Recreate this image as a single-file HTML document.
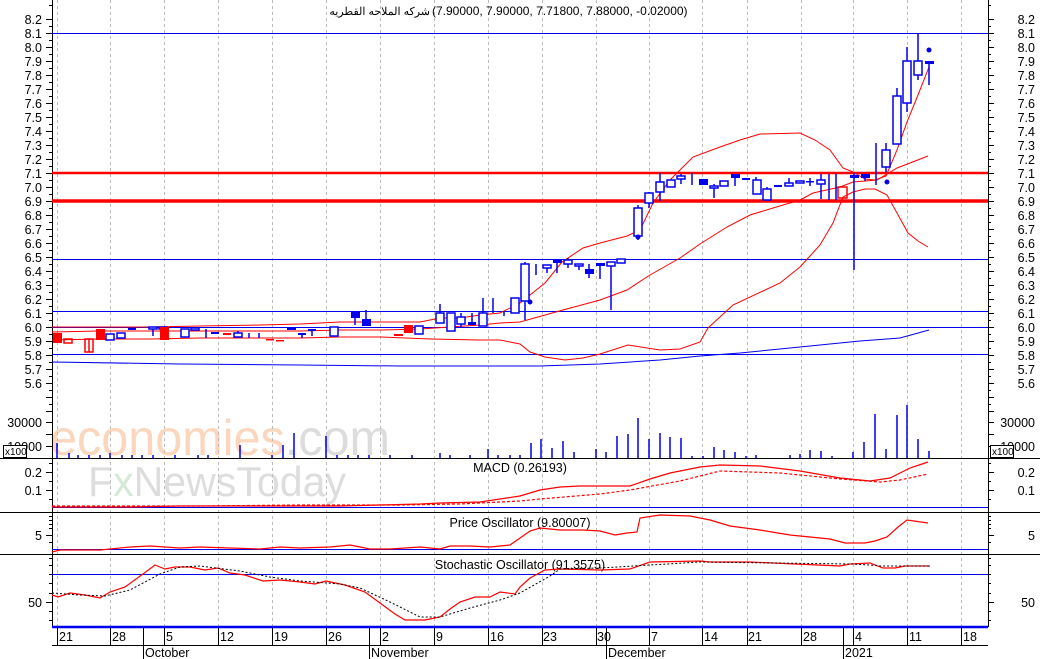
<!DOCTYPE html>
<html><head><meta charset="utf-8"><style>
html,body{margin:0;padding:0;background:#fff;}
body{width:1040px;height:659px;overflow:hidden;position:relative;font-family:"Liberation Sans","Noto Sans CJK SC",sans-serif;}
svg{position:absolute;left:0;top:0;}
text{font-family:"Liberation Sans","Noto Sans CJK SC",sans-serif;font-size:12.5px;fill:#000;}
</style></head><body>
<svg width="1040" height="659" viewBox="0 0 1040 659" xmlns="http://www.w3.org/2000/svg">
<!-- watermarks -->
<text x="50" y="455" textLength="340" lengthAdjust="spacingAndGlyphs" style="font-size:50px;fill:#fcd6bc;">economies<tspan style="fill:#dcdcdc">.com</tspan></text>
<text x="88" y="496" textLength="258" lengthAdjust="spacingAndGlyphs" style="font-size:42px;fill:#dddddd;">F<tspan style="fill:#d6e8d6">x</tspan>NewsToday</text>

<!-- vertical dashed grid -->
<g stroke="#bbb" stroke-dasharray="3,3" stroke-width="1">
<path d="M57.5 0V627M110.5 0V627M164.5 0V627M218.5 0V627M272.5 0V627M326.5 0V627M380.5 0V627M434.5 0V627M488.5 0V627M542.5 0V627M596.5 0V627M649.5 0V627M702.5 0V627M747.5 0V627M801.5 0V627M853.5 0V627M907.5 0V627M961.5 0V627"/>
</g>

<!-- axes lines -->
<g stroke="#000" stroke-width="1">
<path d="M52.5 0V627M988.5 0V627M0 458.5H1040M0 512.5H1040M0 554.5H1040M52 645.5H988"/>
</g>
<!-- ticks -->
<g stroke="#000">
<path d="M46 19.5h6M46 33.5h6M46 47.5h6M46 61.5h6M46 75.5h6M46 89.5h6M46 103.5h6M46 117.5h6M46 131.5h6M46 145.5h6M46 159.5h6M46 173.5h6M46 187.5h6M46 201.5h6M46 215.5h6M46 229.5h6M46 243.5h6M46 257.5h6M46 271.5h6M46 285.5h6M46 299.5h6M46 313.5h6M46 327.5h6M46 341.5h6M46 355.5h6M46 369.5h6M46 383.5h6M46 397.5h6M46 411.5h6M46 422.5h6M46 434.5h6M46 446.5h6"/>
<path d="M49 5.5h3M49 26.5h3M49 40.5h3M49 54.5h3M49 68.5h3M49 82.5h3M49 96.5h3M49 110.5h3M49 124.5h3M49 138.5h3M49 152.5h3M49 166.5h3M49 180.5h3M49 194.5h3M49 208.5h3M49 222.5h3M49 236.5h3M49 250.5h3M49 264.5h3M49 278.5h3M49 292.5h3M49 306.5h3M49 320.5h3M49 334.5h3M49 348.5h3M49 362.5h3M49 376.5h3M49 390.5h3M49 404.5h3"/>
<path d="M988 19.5h6M988 33.5h6M988 47.5h6M988 61.5h6M988 75.5h6M988 89.5h6M988 103.5h6M988 117.5h6M988 131.5h6M988 145.5h6M988 159.5h6M988 173.5h6M988 187.5h6M988 201.5h6M988 215.5h6M988 229.5h6M988 243.5h6M988 257.5h6M988 271.5h6M988 285.5h6M988 299.5h6M988 313.5h6M988 327.5h6M988 341.5h6M988 355.5h6M988 369.5h6M988 383.5h6M988 397.5h6M988 411.5h6M988 422.5h6M988 434.5h6M988 446.5h6"/>
<path d="M988 5.5h3M988 26.5h3M988 40.5h3M988 54.5h3M988 68.5h3M988 82.5h3M988 96.5h3M988 110.5h3M988 124.5h3M988 138.5h3M988 152.5h3M988 166.5h3M988 180.5h3M988 194.5h3M988 208.5h3M988 222.5h3M988 236.5h3M988 250.5h3M988 264.5h3M988 278.5h3M988 292.5h3M988 306.5h3M988 320.5h3M988 334.5h3M988 348.5h3M988 362.5h3M988 376.5h3M988 390.5h3M988 404.5h3"/>
<path d="M46 472.5h6M46 490.5h6M49 463.5h3M49 481.5h3M49 499.5h3M988 472.5h6M988 490.5h6M988 463.5h3M988 481.5h3M988 499.5h3"/>
<path d="M46 535.5h6M49 516.5h3M49 520.5h3M49 524.5h3M49 528.5h3M49 542.5h3M988 535.5h6M988 516.5h3M988 520.5h3M988 524.5h3M988 528.5h3M988 542.5h3"/>
<path d="M46 602.5h6M49 558.5h3M49 565.5h3M49 574.5h3M49 583.5h3M49 593.5h3M49 611.5h3M49 620.5h3M988 602.5h6M988 558.5h3M988 565.5h3M988 574.5h3M988 583.5h3M988 593.5h3M988 611.5h3M988 620.5h3"/>
</g>

<!-- axis labels -->
<g text-anchor="end">
<text x="42" y="24">8.2</text><text x="42" y="38">8.1</text><text x="42" y="52">8.0</text><text x="42" y="66">7.9</text><text x="42" y="80">7.8</text><text x="42" y="94">7.7</text><text x="42" y="108">7.6</text><text x="42" y="122">7.5</text><text x="42" y="136">7.4</text><text x="42" y="150">7.3</text><text x="42" y="164">7.2</text><text x="42" y="178">7.1</text><text x="42" y="192">7.0</text><text x="42" y="206">6.9</text><text x="42" y="220">6.8</text><text x="42" y="234">6.7</text><text x="42" y="248">6.6</text><text x="42" y="262">6.5</text><text x="42" y="276">6.4</text><text x="42" y="290">6.3</text><text x="42" y="304">6.2</text><text x="42" y="318">6.1</text><text x="42" y="332">6.0</text><text x="42" y="346">5.9</text><text x="42" y="360">5.8</text><text x="42" y="374">5.7</text><text x="42" y="388">5.6</text>
<text x="42" y="427">30000</text><text x="42" y="451">10000</text>
<text x="42" y="477">0.2</text><text x="42" y="495">0.1</text><text x="42" y="540">5</text><text x="42" y="607">50</text>
</g>
<g text-anchor="end">
<text x="1035" y="24">8.2</text><text x="1035" y="38">8.1</text><text x="1035" y="52">8.0</text><text x="1035" y="66">7.9</text><text x="1035" y="80">7.8</text><text x="1035" y="94">7.7</text><text x="1035" y="108">7.6</text><text x="1035" y="122">7.5</text><text x="1035" y="136">7.4</text><text x="1035" y="150">7.3</text><text x="1035" y="164">7.2</text><text x="1035" y="178">7.1</text><text x="1035" y="192">7.0</text><text x="1035" y="206">6.9</text><text x="1035" y="220">6.8</text><text x="1035" y="234">6.7</text><text x="1035" y="248">6.6</text><text x="1035" y="262">6.5</text><text x="1035" y="276">6.4</text><text x="1035" y="290">6.3</text><text x="1035" y="304">6.2</text><text x="1035" y="318">6.1</text><text x="1035" y="332">6.0</text><text x="1035" y="346">5.9</text><text x="1035" y="360">5.8</text><text x="1035" y="374">5.7</text><text x="1035" y="388">5.6</text>
<text x="1035" y="427">30000</text><text x="1035" y="451">10000</text>
<text x="1035" y="477">0.2</text><text x="1035" y="495">0.1</text><text x="1035" y="540">5</text><text x="1035" y="607">50</text>
</g>
<!-- x100 boxes -->
<rect x="3.5" y="445.5" width="23" height="12" fill="#fff" stroke="#000"/>
<text x="5" y="455" style="font-size:10px">x100</text>
<rect x="990.5" y="445.5" width="23" height="12" fill="#fff" stroke="#000"/>
<text x="992" y="455" style="font-size:10px">x100</text>

<!-- title -->
<text x="430" y="15" text-anchor="end" style="font-size:11px">شركه الملاحه القطريه</text>
<text x="432" y="15" style="font-size:12px">(7.90000, 7.90000, 7.71800, 7.88000, -0.02000)</text>

<!-- horizontal lines main -->
<g stroke="#0000ee" stroke-width="1">
<path d="M52 33.5H988M52 259.5H988M52 311.5H988M52 327.5H988M52 354.5H988"/>
</g>
<path d="M52 173H988" stroke="#ff0000" stroke-width="2.5"/>
<path d="M52 201H988" stroke="#ff0000" stroke-width="3.5"/>

<polyline fill="none" stroke="#0000ee" points="52,362 180,364 300,365 400,366 540,366 600,364 660,360 700,356 740,353 800,347 860,341 900,338 929,330"/>

<g fill="none" stroke="#ff0000" stroke-width="1">
<polyline points="52,327 100,327 150,327 200,326 260,325 300,324 340,322 380,322 420,322 440,318 460,318 480,315 500,313 520,303 545,283 562,262 583,248 600,243 627,236 640,230 653,203 670,180 693,157 720,147 740,140 760,134 800,133 815,140 830,150 843,168 853,172 865,179 875,180 886,176 897,150 907,122 918,95 929,67"/>
<polyline points="52,332 100,331 150,331 200,331 260,331 300,331 340,330 380,330 420,329 450,327 480,325 500,323 520,322 563,310 600,300 627,290 650,275 680,258 700,244 727,227 750,215 773,208 800,200 813,193 840,187 853,182 877,180 897,168 910,163 928,156"/>
<polyline points="52,340 100,339 150,339 200,338 260,338 300,338 340,337 380,337 430,339 480,340 500,340 520,344 530,352 545,357 565,360 583,358 600,354 628,345 660,350 680,349 700,342 708,328 733,305 780,283 800,267 820,245 833,223 843,197 853,192 865,189 875,189 887,195 897,213 908,233 918,241 928,247"/>
</g>

<!-- candles -->
<g stroke="#0000ee" fill="none" stroke-width="1.5">
<path d="M153 327V336M206 329V338M238 331V337M249 333V338M259 333V338M302 333V338M312 329V336M355 312V325M366 310V326M440 304V323M461 313V327M472 313V324M483 298V326M493 298V313M504 311V316M525 262V320M536 264V275M547 265V273M557 260V273M568 258V268M579 264V270M589 264V278M600 263V279M611 262V310M638 205V240M649 192V208M660 173V201M681 174V184M692 173V185M714 184V198M735 174V186M756 177V194M767 187V200M789 178V186M810 178V186M821 174V199M829 174V200M836 174V200M854 173V270M865 174V181M876 143V185M886 143V172M897 88V144M907 47V112M918 33V80M929 61V85"/>
</g>
<g stroke="#0000ee" fill="#fff" stroke-width="1.5">
<rect x="106" y="334" width="8" height="6"/><rect x="117" y="333" width="8" height="5"/><rect x="149" y="327" width="8" height="2"/><rect x="159" y="327" width="8" height="2"/><rect x="181" y="329" width="8" height="8"/><rect x="191" y="328" width="8" height="2"/><rect x="234" y="333" width="8" height="4"/><rect x="330" y="327" width="8" height="9"/><rect x="415" y="326" width="8" height="8"/>
<rect x="436" y="313" width="8" height="10"/><rect x="447" y="313" width="8" height="18"/><rect x="457" y="317" width="8" height="7"/><rect x="479" y="313" width="8" height="13"/><rect x="511" y="298" width="8" height="15"/><rect x="521" y="264" width="8" height="37"/><rect x="543" y="265" width="8" height="3"/><rect x="564" y="260" width="8" height="4"/><rect x="575" y="264" width="8" height="2"/><rect x="607" y="262" width="8" height="4"/><rect x="617" y="259" width="8" height="4"/>
<rect x="634" y="208" width="8" height="28"/><rect x="645" y="193" width="8" height="10"/><rect x="656" y="182" width="8" height="10"/><rect x="667" y="180" width="8" height="7"/><rect x="677" y="176" width="8" height="3"/><rect x="710" y="186" width="8" height="2"/><rect x="720" y="181" width="8" height="5"/><rect x="753" y="180" width="8" height="14"/><rect x="763" y="189" width="8" height="11"/><rect x="785" y="183" width="8" height="3"/><rect x="796" y="181" width="8" height="2"/><rect x="817" y="180" width="8" height="4"/>
<rect x="882" y="150" width="8" height="17"/><rect x="893" y="96" width="8" height="48"/><rect x="903" y="61" width="8" height="42"/><rect x="914" y="61" width="8" height="14"/>
</g>
<g fill="#0000ee">
<rect x="128" y="328" width="8" height="2"/><rect x="211" y="332" width="8" height="2"/><rect x="287" y="328" width="9" height="2"/><rect x="298" y="333" width="8" height="2"/><rect x="308" y="329" width="8" height="2"/><rect x="351" y="312" width="9" height="6"/><rect x="362" y="319" width="9" height="7"/><rect x="468" y="322" width="8" height="3"/><rect x="553" y="260" width="9" height="3"/><rect x="585" y="269" width="9" height="5"/><rect x="596" y="263" width="9" height="3"/>
<rect x="699" y="179" width="9" height="6"/><rect x="731" y="174" width="9" height="4"/><rect x="742" y="178" width="8" height="2"/><rect x="774" y="185" width="8" height="2"/><rect x="806" y="181" width="8" height="1.5"/><rect x="850" y="175" width="9" height="3"/><rect x="861" y="174" width="9" height="4"/><rect x="925" y="61" width="9" height="3"/>
<circle cx="530" cy="302" r="2.5"/><circle cx="638" cy="237" r="2.5"/><circle cx="887" cy="182" r="2.5"/><circle cx="929" cy="50" r="2.5"/>
</g>
<g fill="#ff0000">
<rect x="53" y="333" width="9" height="10"/><rect x="96" y="329" width="9" height="11"/><rect x="160" y="327" width="9" height="13"/><rect x="223" y="333" width="8" height="2"/><rect x="266" y="339" width="8" height="1.5"/><rect x="276" y="340" width="8" height="1.5"/><rect x="394" y="334" width="9" height="2"/><rect x="404" y="325" width="9" height="8"/>
</g>
<g fill="none" stroke="#ff0000" stroke-width="1.5">
<rect x="64" y="339" width="8" height="4"/><rect x="85" y="339" width="8" height="13"/><rect x="838" y="187" width="9" height="11"/>
<path d="M89 339V352"/>
</g>

<!-- volume -->
<g stroke="#0000ee" stroke-width="1.5">
<path d="M57 458V443M69 458V453M78 458V455M89 458V455M100 458V455M110 458V453M122 458V455M132 458V455M142 458V455M153 458V455M175 458V455M198 458V455M208 458V455M240 458V445M272 458V455M283 458V445M294 458V433M326 458V436M337 458V455M348 458V455M358 458V455M369 458V455M390 458V455M412 458V455M440 458V453M450 458V455M470 458V455M488 458V449M498 458V455M510 458V455M520 458V455M531 458V443M541 458V439M552 458V448M563 458V441M574 458V452M596 458V449M606 458V452M617 458V436M628 458V434M638 458V418M649 458V439M660 458V433M670 458V437M681 458V438M692 458V456M703 458V456M714 458V447M724 458V450M735 458V452M746 458V456M756 458V455M790 458V455M800 458V454M810 458V450M821 458V451M832 458V456M853 458V452M864 458V442M875 458V414M886 458V449M897 458V415M907 458V405M918 458V439M929 458V451"/>
</g>

<!-- MACD -->
<text x="520" y="472" text-anchor="middle">MACD (0.26193)</text>
<path d="M52 507.5H988" stroke="#0000ee"/>
<polyline fill="none" stroke="#ff0000" stroke-width="1.2" points="52,507 130,507 180,506 260,506 340,506 380,505 420,504 440,503 480,502 520,496 540,490 560,487 580,486 630,486 650,479 670,473 700,467 720,465 760,466 800,471 840,478 870,481 890,478 910,468 928,462"/>
<polyline fill="none" stroke="#ff0000" stroke-width="1.2" stroke-dasharray="3,2" points="52,506 130,506 200,506 300,505 400,505 460,504 520,501 540,499 600,494 630,490 680,481 720,471 780,473 840,479 880,482 900,480 928,474"/>

<!-- Price Oscillator -->
<text x="520" y="527" text-anchor="middle">Price Oscillator (9.80007)</text>
<path d="M52 549.5H988" stroke="#0000ee"/>
<polyline fill="none" stroke="#ff0000" stroke-width="1.2" points="52,552 60,550 100,550 130,547 150,546 180,548 200,547 230,548 260,549 280,547 300,548 330,547 350,545 370,549 390,549 420,547 440,549 450,546 470,546 490,547 510,545 530,531 540,528 560,530 583,530 600,531 615,535 627,533 637,532 640,518 660,515 690,516 710,520 730,526 760,530 790,535 830,539 845,543 865,543 875,541 887,537 898,527 907,520 928,523"/>

<!-- Stochastic -->
<text x="520" y="569" text-anchor="middle">Stochastic Oscillator (91.3575)</text>
<path d="M52 574.5H988" stroke="#0000ee"/>
<polyline fill="none" stroke="#ff0000" stroke-width="1.2" points="52,595 58,597 70,593 85,595 100,598 110,592 125,587 143,574 155,565 165,569 175,567 190,567 205,570 218,568 230,573 245,575 263,581 280,580 300,582 315,584 326,581 345,585 365,592 380,603 395,614 405,620 425,620 440,617 450,609 460,602 475,597 490,597 500,592 515,594 520,587 530,578 545,570 560,569 600,570 630,569 650,562 700,561 710,562 750,562 840,566 850,564 870,563 883,568 895,568 905,566 930,566"/>
<polyline fill="none" stroke="#000" stroke-width="1" stroke-dasharray="2,2" points="52,593 80,595 105,596 130,590 160,574 180,567 200,566 240,571 270,577 300,581 340,584 360,588 390,602 420,617 440,617 470,608 500,600 520,593 550,576 560,569 600,568 700,562 850,564 870,565 880,566 930,566"/>

<!-- bottom axis -->
<path d="M52 627H988" stroke="#0000ee" stroke-width="2.5"/>
<g stroke="#000">
<path d="M57.5 628V645M110.5 628V645M164.5 628V645M218.5 628V645M272.5 628V645M326.5 628V645M380.5 628V645M434.5 628V645M488.5 628V645M542.5 628V645M596.5 628V645M649.5 628V645M702.5 628V645M747.5 628V645M801.5 628V645M853.5 628V645M907.5 628V645M961.5 628V645"/>
<path d="M143.5 628V659M369.5 628V659M606.5 628V659M843.5 628V659"/>
</g>
<g>
<text x="59" y="641">21</text><text x="112" y="641">28</text><text x="166" y="641">5</text><text x="220" y="641">12</text><text x="274" y="641">19</text><text x="328" y="641">26</text><text x="382" y="641">2</text><text x="436" y="641">9</text><text x="490" y="641">16</text><text x="543" y="641">23</text><text x="597" y="641">30</text><text x="651" y="641">7</text><text x="704" y="641">14</text><text x="748" y="641">21</text><text x="803" y="641">28</text><text x="855" y="641">4</text><text x="909" y="641">11</text><text x="963" y="641">18</text>
<text x="145" y="657">October</text><text x="371" y="657">November</text><text x="608" y="657">December</text><text x="845" y="657">2021</text>
</g>
</svg>
</body></html>
